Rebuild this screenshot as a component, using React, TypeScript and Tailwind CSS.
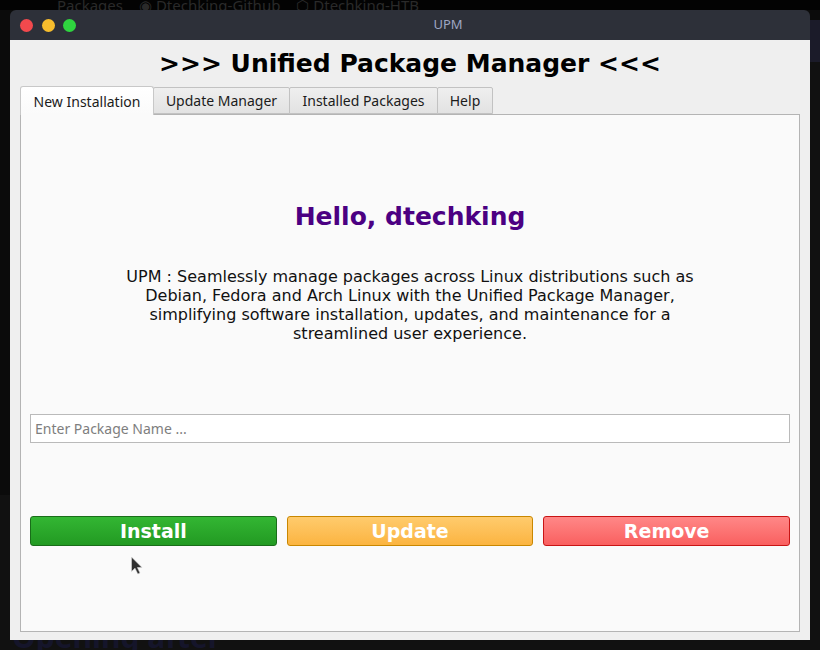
import React from "react"

const dejavu = { fontFamily: '"DejaVu Sans", Verdana, sans-serif' }

function Tab({ label, width, active }: { label: string; width: string; active?: boolean }) {
  if (active) {
    return (
      <div
        className={`${width} -mb-px z-10 flex h-[29px] items-center justify-center rounded-t-[3px] border border-b-0 border-[#c8c8c8] bg-gradient-to-b from-[#ffffff] to-[#fafafa] text-[14px] text-[#1b1b1b]`}
      >
        {label}
      </div>
    )
  }
  return (
    <div
      className={`${width} mt-[2px] -ml-px flex h-[27px] items-center justify-center rounded-t-[2px] border border-[#c2c2c2] bg-gradient-to-b from-[#efefef] to-[#e2e2e2] text-[14px] text-[#1b1b1b]`}
    >
      {label}
    </div>
  )
}

function ActionButton({ label, className }: { label: string; className: string }) {
  return (
    <button
      className={`flex h-[30px] flex-1 items-center justify-center rounded-[3px] border text-[19px] font-bold text-white ${className}`}
      style={dejavu}
    >
      {label}
    </button>
  )
}

export default function App() {
  return (
    <div
      className="relative h-[650px] w-[820px] overflow-hidden bg-[#0b0b0b] pl-[10px] pt-[10px]"
      style={{ fontFamily: '"Noto Sans", sans-serif' }}
    >
      {/* desktop behind the window */}
      <div className="absolute left-0 top-0 h-[10px] w-[820px] bg-[#030303]" />
      <div className="absolute left-[57px] top-[-6px] flex gap-4 text-[15px] text-[#2a2a2a]">
        <span>Packages</span>
        <span>◉ Dtechking-Github</span>
        <span>⬡ Dtechking-HTB</span>
      </div>
      <div className="absolute left-0 top-[495px] h-[155px] w-[820px] bg-[#111111]" />
      <div className="absolute left-[810px] top-[20px] h-[42px] w-[10px] bg-[#1b1b29]" />
      <div className="absolute left-[810px] top-[62px] h-[588px] w-[10px] bg-[#111111]" />
      <div className="absolute left-[12px] top-[614px] text-[30px] font-bold text-[#15152a]">Opening after</div>

      {/* window */}
      <div className="relative flex h-[630px] w-[800px] flex-col overflow-hidden rounded-t-[6px]">
        <div className="relative flex h-[30px] items-center bg-[#2d3039] px-[10px]">
          <div className="flex gap-[8.5px]">
            <span className="h-[13px] w-[13px] rounded-full bg-[#f2494d]" />
            <span className="h-[13px] w-[13px] rounded-full bg-[#f7bd2d]" />
            <span className="h-[13px] w-[13px] rounded-full bg-[#2fd53f]" />
          </div>
          <div className="flex-1 pl-[20px] text-center text-[13px] text-[#9ea6c4]">UPM</div>
        </div>

        <div className="flex flex-1 flex-col bg-[#efefef] px-[10px] pb-[8px]">
          <h1
            className="flex h-[45px] items-center justify-center pt-[3px] text-[25px] font-bold text-black"
            style={dejavu}
          >
            &gt;&gt;&gt; Unified Package Manager &lt;&lt;&lt;
          </h1>

          <div className="flex items-end">
            <Tab label="New Installation" width="w-[134px]" active />
            <Tab label="Update Manager" width="w-[137px]" />
            <Tab label="Installed Packages" width="w-[149px]" />
            <Tab label="Help" width="w-[56px]" />
          </div>

          <div className="flex flex-1 flex-col border border-[#b4b4b4] bg-[#fafafa] px-[9px]">
            <div
              className="mt-[88px] text-center text-[25px] font-bold leading-[28px] text-[#4b0082]"
              style={dejavu}
            >
              Hello, dtechking
            </div>
            <p
              className="mx-auto mt-[36px] w-[590px] text-center text-[16px] leading-[19px] text-[#111]"
              style={dejavu}
            >
              UPM : Seamlessly manage packages across Linux distributions such as Debian, Fedora and Arch Linux with
              the Unified Package Manager, simplifying software installation, updates, and maintenance for a
              streamlined user experience.
            </p>
            <input
              className="mt-[71px] h-[29px] w-full border border-[#bababa] bg-white px-[4px] text-[14px] outline-none placeholder:text-[#7e7e7e]"
              placeholder="Enter Package Name ..."
            />
            <div className="relative mt-[73px] flex gap-[10px]">
              <ActionButton label="Install" className="border-[#196d19] bg-gradient-to-b from-[#33b633] to-[#229a22]" />
              <ActionButton label="Update" className="border-[#c98700] bg-gradient-to-b from-[#ffcb6c] to-[#fbb43f]" />
              <ActionButton label="Remove" className="border-[#c81414] bg-gradient-to-b from-[#ff8787] to-[#f95f5f]" />
              {/* mouse pointer */}
              <svg
                className="absolute left-[100px] top-[40px]"
                width="14"
                height="20"
                viewBox="0 0 14 20"
              >
                <path d="M1.5 1 L1.5 15.5 L5 12.2 L7.8 18 L10 17 L7.4 11.5 L12 11.5 Z" fill="#303030" stroke="#dcdcdc" strokeWidth="0.6" />
              </svg>
            </div>
          </div>
        </div>
      </div>
    </div>
  )
}
